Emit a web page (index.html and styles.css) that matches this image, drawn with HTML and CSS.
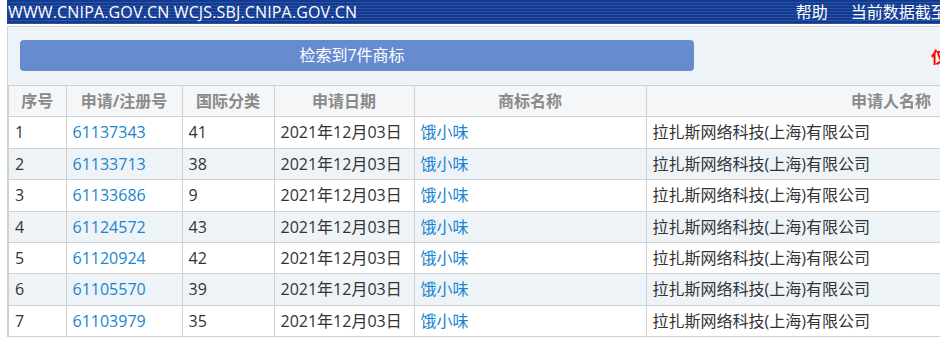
FILE: index.html
```html
<!DOCTYPE html>
<html lang="zh-CN">
<head>
<meta charset="utf-8">
<title>商标检索</title>
<link rel="stylesheet" href="styles.css">
</head>
<body>
<div class="page">
  <header class="topbar">
    <div class="site">WWW.CNIPA.GOV.CN WCJS.SBJ.CNIPA.GOV.CN</div>
    <nav class="topnav">
      <span>帮助</span>
      <span>当前数据截至2021年12月10日</span>
    </nav>
  </header>
  <div class="panel">
    <div class="count-btn">检索到7件商标</div>
    <div class="note">仅供参考，不具有法律效力</div>
  </div>
  <table class="result">
    <colgroup>
      <col class="c1"><col class="c2"><col class="c3"><col class="c4"><col class="c5"><col class="c6">
    </colgroup>
    <thead>
      <tr><th>序号</th><th>申请/注册号</th><th>国际分类</th><th>申请日期</th><th>商标名称</th><th>申请人名称</th></tr>
    </thead>
    <tbody>
      <tr><td>1</td><td><a>61137343</a></td><td>41</td><td>2021年12月03日</td><td><a>饿小味</a></td><td>拉扎斯网络科技(上海)有限公司</td></tr>
      <tr><td>2</td><td><a>61133713</a></td><td>38</td><td>2021年12月03日</td><td><a>饿小味</a></td><td>拉扎斯网络科技(上海)有限公司</td></tr>
      <tr><td>3</td><td><a>61133686</a></td><td>9</td><td>2021年12月03日</td><td><a>饿小味</a></td><td>拉扎斯网络科技(上海)有限公司</td></tr>
      <tr><td>4</td><td><a>61124572</a></td><td>43</td><td>2021年12月03日</td><td><a>饿小味</a></td><td>拉扎斯网络科技(上海)有限公司</td></tr>
      <tr><td>5</td><td><a>61120924</a></td><td>42</td><td>2021年12月03日</td><td><a>饿小味</a></td><td>拉扎斯网络科技(上海)有限公司</td></tr>
      <tr><td>6</td><td><a>61105570</a></td><td>39</td><td>2021年12月03日</td><td><a>饿小味</a></td><td>拉扎斯网络科技(上海)有限公司</td></tr>
      <tr><td>7</td><td><a>61103979</a></td><td>35</td><td>2021年12月03日</td><td><a>饿小味</a></td><td>拉扎斯网络科技(上海)有限公司</td></tr>
    </tbody>
  </table>
</div>
</body>
</html>
```
FILE: styles.css
```css
html, body {
  margin: 0;
  padding: 0;
  overflow: hidden;
  background: #fff;
}
body {
  font-family: "Open Sans", "Noto Sans CJK SC", sans-serif;
  font-size: 16px;
  color: #333;
}
.page {
  margin-left: 7px;
  width: 1140px;
}
.topbar {
  height: 24px;
  display: flex;
  justify-content: space-between;
  align-items: center;
  color: #fff;
  background: repeating-linear-gradient(to bottom, #123a8e 0, #123a8e 2px, #2a52a6 2px, #2a52a6 3px);
  line-height: 24px;
}
.site {
  padding-left: 1px;
  letter-spacing: 0.15px;
}
.topnav {
  display: flex;
  gap: 23px;
  padding-right: 79px;
}
.panel {
  margin-top: 2px;
  border-top: 1px solid #d4d4d4;
  border-left: 1px solid #d4d4d4;
  background: #eef3f8;
  padding: 13px 12px 14px;
  display: flex;
  align-items: center;
}
.count-btn {
  box-sizing: border-box;
  width: 674px;
  height: 31px;
  line-height: 31px;
  padding-right: 10px;
  background: #668bcf;
  border-radius: 4px;
  color: #fff;
  text-align: center;
}
.note {
  margin-left: 237px;
  color: #ff0000;
  font-weight: bold;
}
.result {
  border-collapse: collapse;
  table-layout: fixed;
  width: 1128px;
  border-left: 2px solid #d0d0d0;
}
.c1 { width: 58px; }
.c2 { width: 116px; }
.c3 { width: 92px; }
.c4 { width: 140px; }
.c5 { width: 232px; }
.c6 { width: 490px; }
.result th,
.result td {
  border: 1px solid #d0d0d0;
  height: 22.4px;
  line-height: 22.4px;
  padding: 4px 6px;
  white-space: nowrap;
  overflow: hidden;
}
.result th {
  background: #f5f6f7;
  color: #8a8a8a;
  font-weight: bold;
  text-align: center;
}
.result td {
  text-align: left;
}
.result tbody tr:nth-child(even) td {
  background: #eef3f8;
}
.result a {
  color: #1a85cf;
  text-decoration: none;
}
```
